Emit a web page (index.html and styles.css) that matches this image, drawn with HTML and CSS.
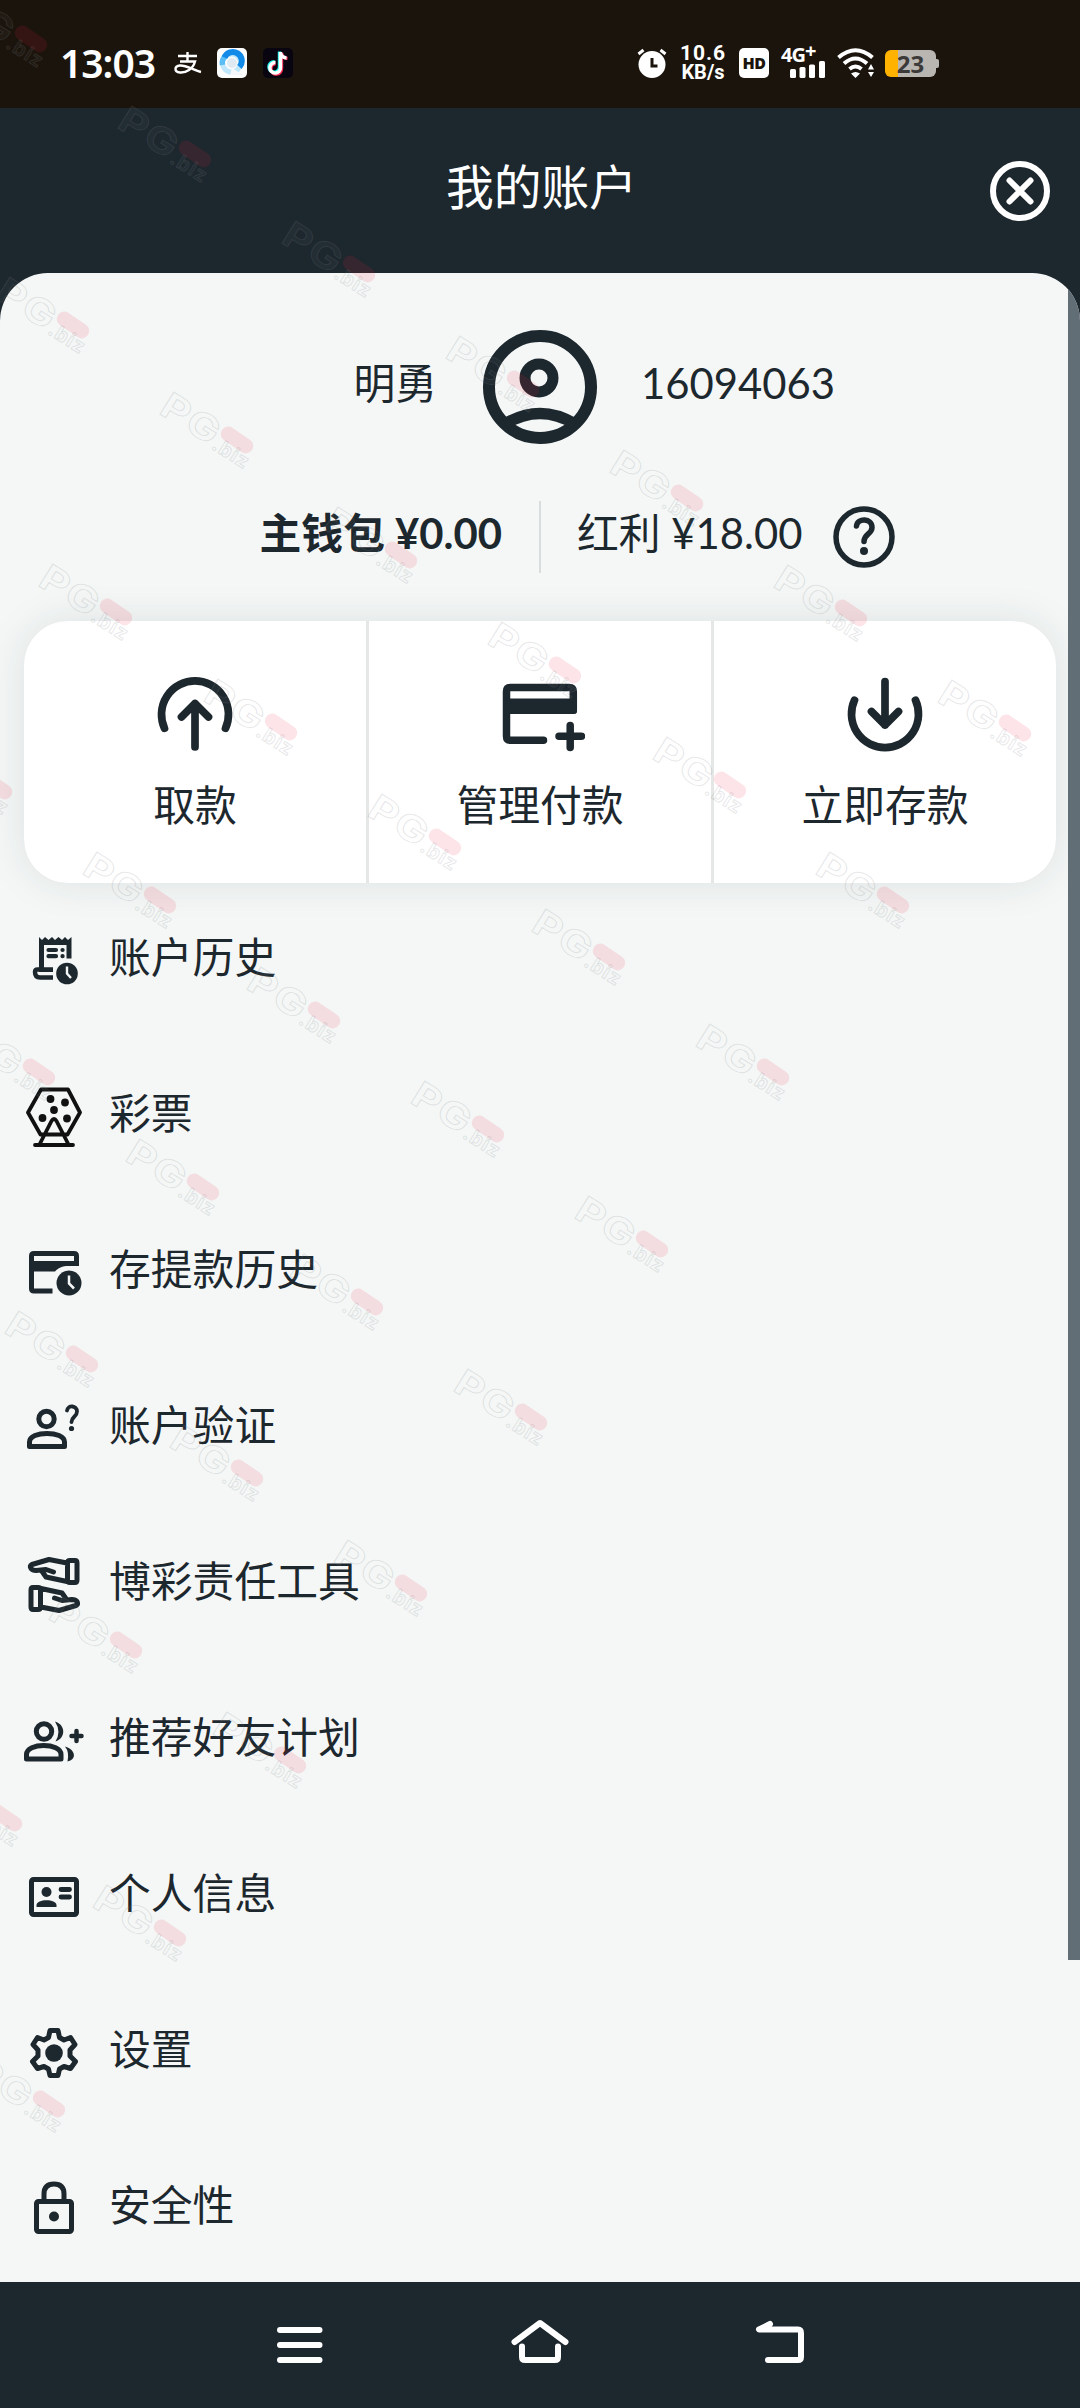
FILE: index.html
```html
<!DOCTYPE html>
<html lang="zh-CN">
<head>
<meta charset="utf-8">
<title>我的账户</title>
<link rel="stylesheet" href="styles.css">
</head>
<body>
<div class="screen">
  <div class="status">
    <div class="status-left">
      <span class="clock">13:03</span>
      <svg class="app-pay" width="30" height="24" viewBox="0 0 30 24" fill="none" stroke="#fff" stroke-width="2.4"><path d="M5 5H24M14.500 1V10M7 10.500H22C20 18 13 22 7 21.500C1 21 1 15 7 14.500C13 14 20 19 28 21"/></svg>
      <svg class="app-browser" width="30" height="30" viewBox="0 0 30 30"><rect width="30" height="30" rx="5" fill="#fdfdfe"/><circle cx="14.500" cy="15" r="9" fill="none" stroke="#bfe6fb" stroke-width="5"/><path d="M5.500 17A9 9 0 0 1 8.500 8.200" fill="none" stroke="#5bbdf5" stroke-width="5.500"/><path d="M7.500 9.500A9 9 0 1 1 22.500 19" fill="none" stroke="#128ae8" stroke-width="6"/><path d="M15 20L26 27H13Z" fill="#f4f8fb"/><circle cx="15" cy="15" r="5" fill="#dfe9f1"/></svg>
      <svg class="app-video" width="30" height="30" viewBox="0 0 30 30"><rect width="30" height="30" rx="5" fill="#080511"/><g fill="none" stroke-width="3.400"><path d="M16.500 3.500V19A5.300 5.300 0 1 1 11.500 13.600M16.500 4Q17.500 9 22.500 9.500" stroke="#25f4ee"/><path d="M18.500 5V20.500A5.300 5.300 0 1 1 12.500 15.500M18.500 5Q19.500 10 24.500 10.500" stroke="#fe2c55"/><path d="M17.500 4V19.500A5.300 5.300 0 1 1 12.500 14.500M17.500 4.500Q18.500 9.500 23.500 10" stroke="#fff"/></g></svg>
    </div>
    <div class="status-right">
      <svg width="30" height="30" viewBox="0 0 30 30"><circle cx="15" cy="16.500" r="13.500" fill="#fff"/><path d="M1.500 6L6.500 2M28.500 6L23.500 2" stroke="#fff" stroke-width="3"/><path d="M15 10V18H20.500" fill="none" stroke="#1b140d" stroke-width="3"/></svg>
      <span class="speed"><b>10.6</b><b class="unit">KB/s</b></span>
      <span class="hd">HD</span>
      <span class="cell"><b>4G<i>+</i></b><svg width="36" height="17" viewBox="0 0 36 17" fill="#fff"><rect y="8" width="6" height="9" rx="1.500"/><rect x="9.500" y="6" width="6" height="11" rx="1.500"/><rect x="19" y="3.500" width="6" height="13.500" rx="1.500"/><rect x="29" y="0" width="6" height="17" rx="1.500"/></svg></span>
      <svg class="wifi" width="38" height="30" viewBox="0 0 38 30" fill="none" stroke="#fff" stroke-width="4"><path d="M1.500 9.500Q18.500 -5 35.500 9.500"/><path d="M7 15.500Q18.500 5.500 30 15.500"/><path d="M12.500 21Q18.500 16 24.500 21"/><path d="M18.500 30L14 25.500Q18.500 22.500 23 25.500ZM34 16L37 21.500H31ZM34 29L37 24H31Z" fill="#fff" stroke="none"/></svg>
      <span class="battery"><span>23</span></span>
    </div>
  </div>

  <header class="header">
    <h1>我的账户</h1>
    <svg class="close" width="60" height="60" viewBox="0 0 60 60" fill="none" stroke="#fff" stroke-width="6" stroke-linecap="round"><circle cx="30" cy="30" r="27"/><path d="M19.500 19.500L40.500 40.500M40.500 19.500L19.500 40.500"/></svg>
  </header>

  <main class="sheet">
    <div class="user">
      <span class="name">明勇</span>
      <svg width="114" height="114" viewBox="0 0 114 114" fill="none" stroke="#1d272e"><circle cx="57" cy="57" r="51" stroke-width="12"/><circle cx="56" cy="48" r="14" stroke-width="11"/><path d="M22 94Q57 73 92 94" stroke-width="11.500"/></svg>
      <span class="uid">16094063</span>
    </div>
    <div class="wallet">
      <span class="main-wallet">主钱包 ¥0.00</span>
      <span class="bar"></span>
      <span class="bonus">红利 ¥18.00</span>
      <svg width="62" height="62" viewBox="0 0 62 62" fill="none" stroke="#1d272e" stroke-width="5.500" stroke-linecap="round"><circle cx="31" cy="31" r="28"/><path d="M23.500 20C24.500 11.500 39 12 39 21.500C39 28 31 28 31 35.500" stroke-width="5.500"/><circle cx="31" cy="45" r="4" fill="#1d272e" stroke="none"/></svg>
    </div>

    <div class="actions">
      <div class="action">
        <svg viewBox="0 0 90 90" fill="none" stroke="#1d272e" stroke-width="7.700" stroke-linecap="round" stroke-linejoin="round"><path d="M14.500 59.300A33.500 33.500 0 1 1 75.500 59.300M45 78V34.500M31.500 48L45 34.500L58.500 48"/></svg>
        <span>取款</span>
      </div>
      <div class="action">
        <svg viewBox="0 0 90 90" fill="none" stroke="#1d272e" stroke-width="7.500" stroke-linecap="round"><path d="M48.500 71.300H15.500Q11.500 71.300 11.500 67.300V22.500Q11.500 18.500 15.500 18.500H74Q78.300 18.500 78.300 22.500V41.200"/><path d="M11.500 29.500H82V42Q82 45 79 45H11.500Z" fill="#1d272e" stroke="none"/><path d="M75.200 56.500V78.500M64 67.300H86.500"/></svg>
        <span>管理付款</span>
      </div>
      <div class="action">
        <svg viewBox="0 0 90 90" fill="none" stroke="#1d272e" stroke-width="7.700" stroke-linecap="round" stroke-linejoin="round"><path d="M14.500 31.200A33.500 33.500 0 1 0 75.500 31.200M45 12.500V56M31.500 42.500L45 56L58.500 42.500"/></svg>
        <span>立即存款</span>
      </div>
    </div>

    <ul class="menu">
      <li><svg viewBox="0 0 60 60"><path d="M15 9V6L18 9L21 6L24.500 9L28 6L31 9L34.500 6L38 9L41 6L44 9L47.500 6V27.500H42.500V14H20V37H29V41H15Z" fill="#1d272e"/><path d="M29 38.500H13.500Q11 38.500 11 41Q11 46.500 16 46.500H29" fill="none" stroke="#1d272e" stroke-width="4.500"/><path d="M24.500 19H32M24.500 25.200H32M38.500 19H38.600M38.500 25.200H38.600" stroke="#1d272e" stroke-width="4.200" stroke-linecap="round"/><circle cx="43" cy="42.500" r="10.800" fill="#1d272e"/><path d="M43 35.500V42.500L47 47" fill="none" stroke="#f4f7f6" stroke-width="2.400"/></svg><span>账户历史</span></li>
      <li><svg viewBox="0 0 60 60"><g fill="none" stroke="#111" stroke-width="3.800" stroke-linejoin="round" stroke-linecap="round"><path d="M16.500 47.500L4 25.500L17 2.500H44L56 25.500L43.500 47.500H16.500M11 58H49M15.500 57.500L27.500 34Q30 30 32.500 34L44.500 57.500"/></g><g fill="#111"><circle cx="26.500" cy="12" r="3.900"/><circle cx="41" cy="15.500" r="3.900"/><circle cx="30" cy="23" r="3.900"/><circle cx="18.500" cy="31" r="3.900"/><circle cx="43" cy="31.500" r="3.900"/></g></svg><span>彩票</span></li>
      <li><svg viewBox="0 0 60 60"><path d="M28.500 47.500H10Q7.500 47.500 7.500 45V12.500Q7.500 10 10 10H50Q52.500 10 52.500 12.500V22" transform="translate(0 .5)" fill="none" stroke="#1d272e" stroke-width="5"/><path d="M7.500 18H55V23H45C38 23 34 25 31 28.500H7.500Z" fill="#1d272e"/><circle cx="45" cy="40" r="12.500" fill="#1d272e"/><path d="M45 32.500V40.500L50 45.500" fill="none" stroke="#f4f7f6" stroke-width="2.500"/></svg><span>存提款历史</span></li>
      <li><svg viewBox="0 0 60 60" fill="none" stroke="#1d272e" stroke-width="5"><circle cx="22.500" cy="20" r="7.700"/><path d="M5.500 47.500V43C5.500 31.500 40.500 31.500 40.500 43V47.500Z" stroke-linejoin="round"/><path d="M43 11.500C44 5.500 53 6.500 53 12.500C53 18 47.500 17.500 47.500 23" stroke-width="3.800" stroke-linecap="round"/><circle cx="47.500" cy="29.500" r="2.600" fill="#1d272e" stroke="none"/></svg><span>账户验证</span></li>
      <li><svg viewBox="0 0 60 60"><g fill="none" stroke="#1d272e" stroke-width="5" stroke-linejoin="round" stroke-linecap="round"><path id="hand" d="M43.500 8Q43.500 5.500 46 5.500H51Q53 5.500 53 8V25Q53 27.500 51 27.500H46Q43.500 27.500 43.500 25ZM43 8L25 4.500L8 9.500Q5.500 11 7 13.500Q8.500 15.500 12 15.500L22 14.500L29.500 17M18.500 17L22 22L43 26.500"/><use href="#hand" transform="rotate(180 30 30)"/></g></svg><span>博彩责任工具</span></li>
      <li><svg viewBox="0 0 60 60" fill="none" stroke="#1d272e" stroke-width="5"><circle cx="20" cy="20.500" r="7.700"/><path d="M2.500 48V43.500C2.500 31.500 37 31.500 37 43.500V48Z" stroke-linejoin="round"/><path d="M31 10.500C42 14 42 27 31.500 30.500Q37.500 20.500 31 10.500ZM41 35.500C52.500 39 52.500 49 43.500 50.500Q45.500 41 41 35.500Z" fill="#1d272e" stroke="none"/><path d="M52.500 20V30M47.500 25H57.500" stroke-linecap="round" stroke-width="4.500"/></svg><span>推荐好友计划</span></li>
      <li><svg viewBox="0 0 60 60"><rect x="7.500" y="12.500" width="45" height="35" rx="2" fill="none" stroke="#1d272e" stroke-width="5"/><circle cx="22.500" cy="25" r="5" fill="#1d272e"/><path d="M12.500 40V38C12.500 31.500 32.500 31.500 32.500 38V40Z" fill="#1d272e"/><path d="M37 22.500H45.500M37 30H45.500" stroke="#1d272e" stroke-width="4.800" stroke-linecap="round"/></svg><span>个人信息</span></li>
      <li><svg viewBox="0 0 60 60"><path d="M26 7.500H34L35.500 14.500L40 17L46.500 14.500L51 21.500L46 27V33L51.500 38.500L46.500 45.500L40 43.500L35.500 46L34 52.500H26L24.500 46L20 43.500L13.500 45.500L8.500 38.500L14 33V27L9 21.500L13.500 14.500L20 17L24.500 14.500Z" fill="none" stroke="#1d272e" stroke-width="5" stroke-linejoin="round"/><circle cx="30" cy="30" r="8.800" fill="#1d272e"/></svg><span>设置</span></li>
      <li><svg viewBox="0 0 60 60"><rect x="12.500" y="22.500" width="35" height="30" rx="2" fill="none" stroke="#1d272e" stroke-width="5"/><path d="M20 22V15Q20 5 30 5Q40 5 40 15V22" fill="none" stroke="#1d272e" stroke-width="5"/><circle cx="30" cy="37.500" r="5" fill="#1d272e"/></svg><span>安全性</span></li>
    </ul>
    <div class="scroll-thumb"></div>
  </main>

  <nav class="nav">
    <svg viewBox="0 0 60 60"><path d="M10 15H49.500M10 30H49.500M10 45H49.500"/></svg>
    <svg viewBox="0 0 60 60"><path d="M4.500 27L30 8L55.500 27M12 31.500V42Q12 45 15 45H45Q48 45 48 42V31.500"/></svg>
    <svg viewBox="0 0 60 60"><path d="M20 9L9 14.500H48Q51 14.500 51 18V42Q51 45 48 45H18"/></svg>
  </nav>

  <svg class="watermarks" width="1080" height="2408" viewBox="0 0 1080 2408">
    <defs>
      <g id="wm">
        <g transform="rotate(32)">
          <text class="wm-brand" x="-67" y="19" transform="scale(1.22 1)">PG</text>
          <text class="wm-domain" x="-18" y="21">.biz</text>
        </g>
        <rect x="-18" y="-7.500" width="36" height="15" rx="7.500" transform="rotate(34)" fill="#f02040" opacity=".12"/>
      </g>
    </defs>
    <use href="#wm" x="31" y="39"/><use href="#wm" x="195" y="154"/><use href="#wm" x="359" y="269"/><use href="#wm" x="523" y="384"/><use href="#wm" x="687" y="498"/><use href="#wm" x="851" y="613"/><use href="#wm" x="1015" y="728"/>
    <use href="#wm" x="73" y="325"/><use href="#wm" x="237" y="440"/><use href="#wm" x="401" y="555"/><use href="#wm" x="565" y="670"/><use href="#wm" x="730" y="785"/><use href="#wm" x="893" y="900"/>
    <use href="#wm" x="116" y="612"/><use href="#wm" x="281" y="727"/><use href="#wm" x="445" y="842"/><use href="#wm" x="609" y="957"/><use href="#wm" x="773" y="1072"/>
    <use href="#wm" x="-4" y="786"/><use href="#wm" x="160" y="900"/><use href="#wm" x="324" y="1015"/><use href="#wm" x="488" y="1129"/><use href="#wm" x="652" y="1244"/>
    <use href="#wm" x="39" y="1072"/><use href="#wm" x="203" y="1187"/><use href="#wm" x="367" y="1302"/><use href="#wm" x="531" y="1417"/>
    <use href="#wm" x="82" y="1359"/><use href="#wm" x="247" y="1473"/><use href="#wm" x="411" y="1588"/>
    <use href="#wm" x="126" y="1645"/><use href="#wm" x="290" y="1760"/>
    <use href="#wm" x="6" y="1818"/><use href="#wm" x="170" y="1933"/>
    <use href="#wm" x="49" y="2104"/>
  </svg>
</div>
</body>
</html>
```
FILE: styles.css
```css
* { box-sizing: border-box; }

body {
  margin: 0;
  background: #1d272e;
  color: #1d272e;
  font-family: Lato, "Noto Sans CJK SC", sans-serif;
}

.screen {
  position: relative;
  width: 1080px;
  height: 2408px;
  display: flex;
  flex-direction: column;
  overflow: hidden;
}

/* system status bar */
.status {
  height: 108px;
  padding: 18px 141px 0 60px;
  display: flex;
  justify-content: space-between;
  align-items: center;
  background: #1b140d;
  color: #fff;
  font-family: "Noto Sans", sans-serif;
}
.status-left, .status-right { display: flex; align-items: center; }
.clock {
  width: 97px;
  font-size: 39px;
  font-weight: 600;
  line-height: 44px;
  letter-spacing: -1px;
}
.app-pay { margin-left: 16px; }
.app-browser { margin-left: 14px; }
.app-video { margin-left: 16px; }
.speed {
  display: flex;
  flex-direction: column;
  align-items: center;
  width: 46px;
  margin-left: 13px;
  font-family: Roboto, sans-serif;
  font-size: 21px;
  line-height: 19px;
}
.speed b { white-space: nowrap; letter-spacing: 1px; }
.speed .unit { font-size: 20px; letter-spacing: 0; }
.hd {
  width: 30px;
  height: 30px;
  margin-left: 13px;
  border-radius: 5px;
  background: #fff;
  color: #1b140d;
  font-size: 16px;
  font-weight: 900;
  line-height: 30px;
  text-align: center;
  letter-spacing: -.5px;
}
.cell {
  display: flex;
  flex-direction: column;
  align-items: flex-end;
  width: 45px;
  height: 30px;
  margin-left: 12px;
}
.cell b {
  align-self: flex-start;
  height: 13px;
  font-size: 20px;
  line-height: 14px;
  letter-spacing: -1px;
}
.cell i { font-style: normal; position: relative; top: -4px; }
.wifi { margin-left: 11px; }
.battery {
  position: relative;
  width: 51px;
  height: 27px;
  margin: 1px 3px 0 10px;
  border-radius: 6px;
  background: linear-gradient(90deg, #ffb300 13px, #b9b5b1 13px);
  color: #3c3a38;
  font-size: 24px;
  font-weight: 700;
  line-height: 27px;
  text-align: center;
}
.battery::after {
  content: "";
  position: absolute;
  left: 51px;
  top: 9px;
  width: 3px;
  height: 9px;
  border-radius: 0 2px 2px 0;
  background: #b9b5b1;
}

/* title bar */
.header {
  height: 165px;
  padding-right: 30px;
  display: grid;
  grid-template-columns: 93px 1fr 60px;
  align-items: center;
  background: #1d272e;
  color: #fff;
}
.header h1 {
  grid-column: 2;
  margin: 0 0 8px;
  font-size: 47.8px;
  font-weight: 400;
  line-height: 60px;
  text-align: center;
}

/* account sheet */
.sheet {
  position: relative;
  height: 2009px;
  padding: 57px 24px 0;
  border-radius: 48px 48px 0 0;
  background: #f4f7f6;
  overflow: hidden;
  font-size: 41.8px;
}
.user {
  height: 114px;
  display: grid;
  grid-template-columns: 1fr 114px 1fr;
  column-gap: 46px;
  align-items: center;
}
.user span { line-height: 60px; margin-bottom: 8px; }
.name { text-align: right; }
.uid { margin-left: -2px; }
.wallet {
  height: 72px;
  margin-top: 57px;
  display: flex;
  align-items: center;
}
.wallet span { line-height: 60px; white-space: nowrap; }
.main-wallet {
  width: 515px;
  padding-right: 37px;
  margin-bottom: 8px;
  font-weight: 700;
  text-align: right;
}
.wallet .bar { width: 2px; height: 72px; background: #dadddd; }
.bonus { width: 277px; padding-left: 36px; margin-bottom: 8px; }
.wallet svg { margin-left: 15px; }

.actions {
  height: 262px;
  margin-top: 48px;
  display: grid;
  grid-template-columns: repeat(3, 1fr);
  gap: 3px;
  border-radius: 44px;
  background: #e4e7e6;
  box-shadow: 0 0 40px rgba(29, 39, 46, .1);
}
.action {
  padding-top: 48px;
  display: flex;
  flex-direction: column;
  align-items: center;
  background: #fff;
}
.action:first-child { border-radius: 44px 0 0 44px; }
.action:last-child { border-radius: 0 44px 44px 0; }
.action svg { width: 90px; height: 90px; }
.action span { margin-top: 16px; line-height: 60px; }

.menu { margin: 0; padding: 0; list-style: none; }
.menu li {
  height: 156px;
  display: flex;
  align-items: center;
  gap: 25px;
}
.menu svg { width: 60px; height: 60px; }
.menu span { line-height: 60px; margin-bottom: 8px; }

.scroll-thumb {
  position: absolute;
  top: 0;
  right: 0;
  width: 12px;
  height: 1687px;
  background: #626e76;
}

/* system navigation */
.nav {
  height: 126px;
  padding: 0 270px;
  display: flex;
  justify-content: space-between;
  align-items: center;
}
.nav svg {
  width: 60px;
  height: 60px;
  fill: none;
  stroke: #fff;
  stroke-width: 6;
  stroke-linecap: round;
  stroke-linejoin: round;
}

.watermarks { position: absolute; inset: 0; pointer-events: none; }
.wm-brand, .wm-domain {
  font-family: Inter, sans-serif;
  font-weight: 700;
  fill: rgba(244, 247, 246, .05);
  stroke: rgba(120, 125, 128, .18);
  stroke-width: 1px;
}
.wm-brand { font-size: 36px; letter-spacing: 1px; }
.wm-domain { font-size: 20px; letter-spacing: 1px; }
```
